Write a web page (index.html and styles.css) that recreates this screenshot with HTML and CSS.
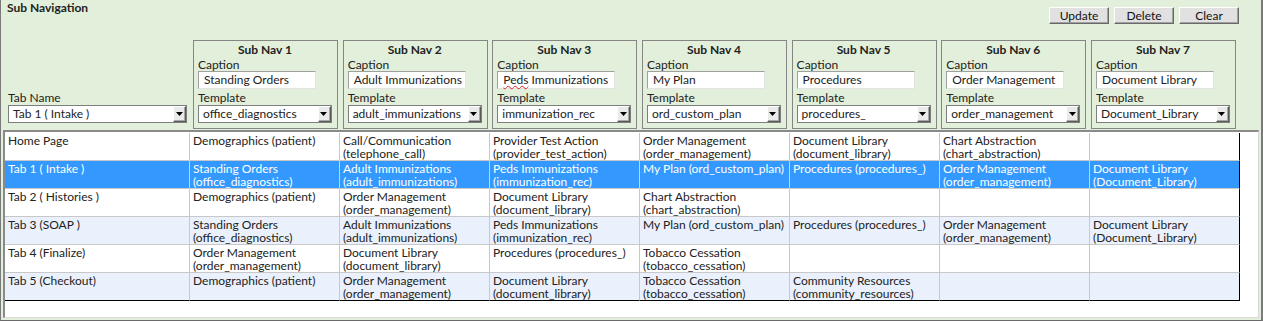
FILE: index.html
```html
<!DOCTYPE html>
<html lang="en">
<head>
<meta charset="utf-8">
<title>Sub Navigation</title>
<link rel="stylesheet" href="styles.css">
</head>
<body>
<div class="panel">
  <div class="header">
    <div class="title">Sub Navigation</div>
    <div class="buttons">
      <button class="btn">Update</button>
      <button class="btn">Delete</button>
      <button class="btn">Clear</button>
    </div>
  </div>
  <div class="navrow">
    <div class="tabname">
      <div class="lbl">Tab Name</div>
      <div class="select wide"><span class="sel-text">Tab 1 ( Intake )</span><span class="sel-btn"><svg width="7" height="4" viewBox="0 0 7 4"><polygon points="0,0 7,0 3.5,4" fill="#000"/></svg></span></div>
    </div>
    <div class="box">
      <div class="box-title">Sub Nav 1</div>
      <div class="lbl cap">Caption</div>
      <div class="input">Standing Orders</div>
      <div class="lbl">Template</div>
      <div class="select"><span class="sel-text">office_diagnostics</span><span class="sel-btn"><svg width="7" height="4" viewBox="0 0 7 4"><polygon points="0,0 7,0 3.5,4" fill="#000"/></svg></span></div>
    </div>
    <div class="box">
      <div class="box-title">Sub Nav 2</div>
      <div class="lbl cap">Caption</div>
      <div class="input">Adult Immunizations</div>
      <div class="lbl">Template</div>
      <div class="select"><span class="sel-text">adult_immunizations</span><span class="sel-btn"><svg width="7" height="4" viewBox="0 0 7 4"><polygon points="0,0 7,0 3.5,4" fill="#000"/></svg></span></div>
    </div>
    <div class="box">
      <div class="box-title">Sub Nav 3</div>
      <div class="lbl cap">Caption</div>
      <div class="input"><span class="spell">Peds</span> Immunizations</div>
      <div class="lbl">Template</div>
      <div class="select"><span class="sel-text">immunization_rec</span><span class="sel-btn"><svg width="7" height="4" viewBox="0 0 7 4"><polygon points="0,0 7,0 3.5,4" fill="#000"/></svg></span></div>
    </div>
    <div class="box">
      <div class="box-title">Sub Nav 4</div>
      <div class="lbl cap">Caption</div>
      <div class="input">My Plan</div>
      <div class="lbl">Template</div>
      <div class="select"><span class="sel-text">ord_custom_plan</span><span class="sel-btn"><svg width="7" height="4" viewBox="0 0 7 4"><polygon points="0,0 7,0 3.5,4" fill="#000"/></svg></span></div>
    </div>
    <div class="box">
      <div class="box-title">Sub Nav 5</div>
      <div class="lbl cap">Caption</div>
      <div class="input">Procedures</div>
      <div class="lbl">Template</div>
      <div class="select"><span class="sel-text">procedures_</span><span class="sel-btn"><svg width="7" height="4" viewBox="0 0 7 4"><polygon points="0,0 7,0 3.5,4" fill="#000"/></svg></span></div>
    </div>
    <div class="box">
      <div class="box-title">Sub Nav 6</div>
      <div class="lbl cap">Caption</div>
      <div class="input">Order Management</div>
      <div class="lbl">Template</div>
      <div class="select"><span class="sel-text">order_management</span><span class="sel-btn"><svg width="7" height="4" viewBox="0 0 7 4"><polygon points="0,0 7,0 3.5,4" fill="#000"/></svg></span></div>
    </div>
    <div class="box">
      <div class="box-title">Sub Nav 7</div>
      <div class="lbl cap">Caption</div>
      <div class="input">Document Library</div>
      <div class="lbl">Template</div>
      <div class="select"><span class="sel-text">Document_Library</span><span class="sel-btn"><svg width="7" height="4" viewBox="0 0 7 4"><polygon points="0,0 7,0 3.5,4" fill="#000"/></svg></span></div>
    </div>
  </div>
  <div class="tablewrap">
    <div class="grid">
      <div class="row">
        <div class="cell">Home Page</div>
        <div class="cell">Demographics (patient)</div>
        <div class="cell">Call/Communication<br>(telephone_call)</div>
        <div class="cell">Provider Test Action<br>(provider_test_action)</div>
        <div class="cell">Order Management<br>(order_management)</div>
        <div class="cell">Document Library<br>(document_library)</div>
        <div class="cell">Chart Abstraction<br>(chart_abstraction)</div>
        <div class="cell"></div>
      </div>
      <div class="row selected">
        <div class="cell">Tab 1 ( Intake )</div>
        <div class="cell">Standing Orders<br>(office_diagnostics)</div>
        <div class="cell">Adult Immunizations<br>(adult_immunizations)</div>
        <div class="cell">Peds Immunizations<br>(immunization_rec)</div>
        <div class="cell">My Plan (ord_custom_plan)</div>
        <div class="cell">Procedures (procedures_)</div>
        <div class="cell">Order Management<br>(order_management)</div>
        <div class="cell">Document Library<br>(Document_Library)</div>
      </div>
      <div class="row">
        <div class="cell">Tab 2 ( Histories )</div>
        <div class="cell">Demographics (patient)</div>
        <div class="cell">Order Management<br>(order_management)</div>
        <div class="cell">Document Library<br>(document_library)</div>
        <div class="cell">Chart Abstraction<br>(chart_abstraction)</div>
        <div class="cell"></div>
        <div class="cell"></div>
        <div class="cell"></div>
      </div>
      <div class="row alt">
        <div class="cell">Tab 3 (SOAP )</div>
        <div class="cell">Standing Orders<br>(office_diagnostics)</div>
        <div class="cell">Adult Immunizations<br>(adult_immunizations)</div>
        <div class="cell">Peds Immunizations<br>(immunization_rec)</div>
        <div class="cell">My Plan (ord_custom_plan)</div>
        <div class="cell">Procedures (procedures_)</div>
        <div class="cell">Order Management<br>(order_management)</div>
        <div class="cell">Document Library<br>(Document_Library)</div>
      </div>
      <div class="row">
        <div class="cell">Tab 4 (Finalize)</div>
        <div class="cell">Order Management<br>(order_management)</div>
        <div class="cell">Document Library<br>(document_library)</div>
        <div class="cell">Procedures (procedures_)</div>
        <div class="cell">Tobacco Cessation<br>(tobacco_cessation)</div>
        <div class="cell"></div>
        <div class="cell"></div>
        <div class="cell"></div>
      </div>
      <div class="row alt last">
        <div class="cell">Tab 5 (Checkout)</div>
        <div class="cell">Demographics (patient)</div>
        <div class="cell">Order Management<br>(order_management)</div>
        <div class="cell">Document Library<br>(document_library)</div>
        <div class="cell">Tobacco Cessation<br>(tobacco_cessation)</div>
        <div class="cell">Community Resources<br>(community_resources)</div>
        <div class="cell"></div>
        <div class="cell"></div>
      </div>
    </div>
  </div>
</div>
</body>
</html>
```
FILE: styles.css
```css
* { box-sizing: border-box; }
html, body { margin: 0; padding: 0; background: #ffffff; }
body {
  font-family: Lato, "Liberation Sans", sans-serif;
  font-size: 12px;
  color: #222;
}
.panel {
  width: 1263px;
  height: 321px;
  background: #e2efda;
  border-left: 1px solid #7a7a7a;
  border-right: 2px solid #7a7a7a;
  border-bottom: 1px solid #6a6a6a;
  display: flex;
  flex-direction: column;
}
.header {
  height: 40px;
  display: flex;
  justify-content: space-between;
  align-items: flex-start;
  padding: 1px 22px 0 6px;
}
.title {
  font-weight: bold;
  line-height: 14px;
}
.buttons {
  display: flex;
  gap: 5px;
  margin-top: 6px;
}
.btn {
  width: 60px;
  height: 17px;
  padding: 0;
  font-family: inherit;
  font-size: 12px;
  line-height: 14px;
  color: #111;
  background: #e1e1e1;
  border: 1px solid;
  border-color: #ffffff #696969 #696969 #ffffff;
  box-shadow: inset -1px -1px 0 #a0a0a0;
}
.navrow {
  height: 89px;
  display: flex;
  align-items: flex-end;
  gap: 4.67px;
  padding-left: 7px;
}
.tabname {
  width: 179px;
  margin-right: 1.33px;
  padding-bottom: 6px;
}
.lbl {
  line-height: 16px;
  height: 16px;
}
.tabname .lbl { line-height: 18px; }
.lbl.cap {
  line-height: 13px;
  height: 13px;
}
.box {
  width: 145px;
  height: 89px;
  border: 1px solid #858585;
  padding: 1px 5px 5px 4px;
}
.box-title {
  font-weight: bold;
  text-align: center;
  line-height: 16px;
  height: 16px;
}
.box .lbl:not(.cap) { line-height: 18px; }
.input {
  width: 118px;
  height: 18px;
  background: #fff;
  border: 1px solid;
  border-color: #a0a0a0 #e3e3e3 #e3e3e3 #a0a0a0;
  padding-left: 5px;
  line-height: 16px;
  white-space: nowrap;
}
.spell {
  text-decoration: underline wavy #e02020;
  text-decoration-thickness: 1px;
  text-underline-offset: 1px;
  text-decoration-skip-ink: none;
}
.select {
  width: 134px;
  height: 18px;
  background: #fff;
  border: 1px solid #7e7e7e;
  display: flex;
}
.select.wide { width: 179px; }
.sel-text {
  flex: 1;
  padding-left: 4px;
  line-height: 16px;
  white-space: nowrap;
  overflow: hidden;
}
.sel-btn {
  width: 13px;
  height: 16px;
  background: #eaeaea;
  border: 1px solid;
  border-color: #ffffff #5a5a5a #5a5a5a #ffffff;
  box-shadow: inset -1px -1px 0 #a8a8a8;
  display: flex;
  align-items: center;
  justify-content: center;
}
.sel-btn svg { display: block; margin-right: 1px; }
.tablewrap {
  margin: 1px 2px 0 2px;
  height: 188px;
  background: #fff;
  border-top: 2px solid #8a8a8a;
  border-left: 2px solid #8a8a8a;
  border-right: 1px solid #d8d8d8;
  border-bottom: 1px solid #d8d8d8;
  padding-top: 1px;
}
.grid {
  width: 1235px;
}
.row {
  display: grid;
  grid-template-columns: 185px repeat(7, 150px);
  background: #fff;
}
.row.alt { background: #eaf1fc; }
.row.selected { background: #3399ff; color: #fff; }
.cell {
  height: 28px;
  padding: 1px 3px 0 3px;
  line-height: 13px;
  white-space: nowrap;
  border-right: 1px solid #c8c8c8;
  border-bottom: 1px solid #c8c8c8;
}
.row.selected .cell { border-right-color: #b9d8f8; }
.row .cell:last-child { border-right-color: #000; }
.row.last .cell { border-bottom-color: #000; }
```
